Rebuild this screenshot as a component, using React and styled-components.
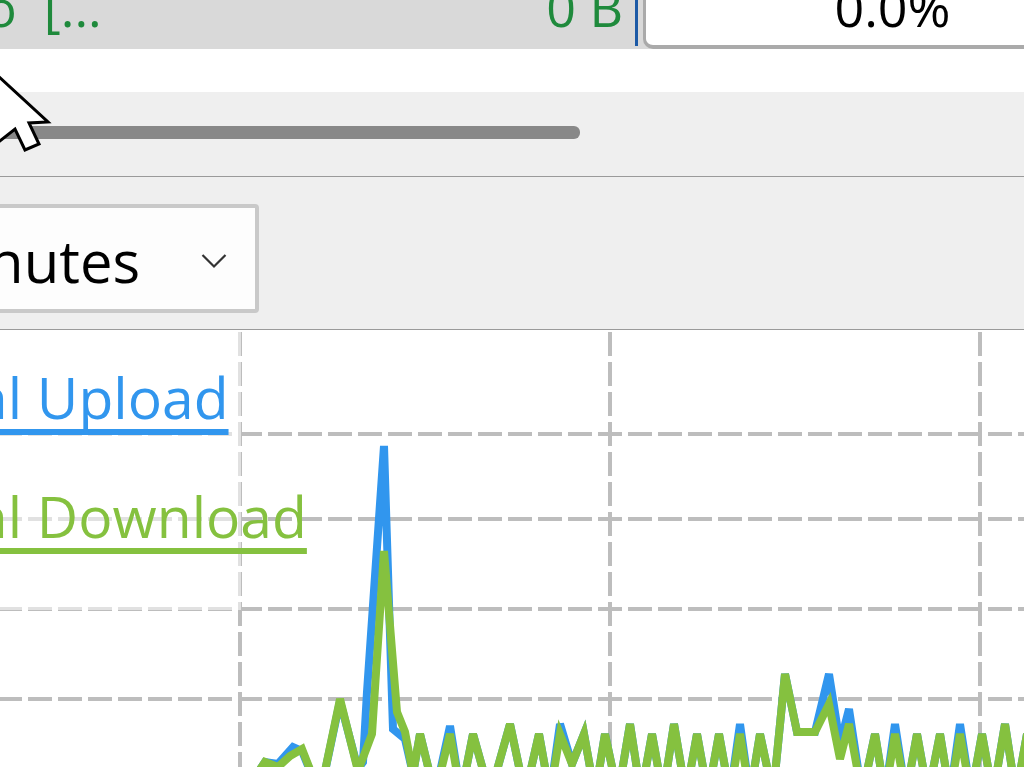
import React from "react";
import styled, { createGlobalStyle } from "styled-components";

const GlobalStyle = createGlobalStyle`
	html, body {
		margin: 0;
		padding: 0;
		background: #ffffff;
	}
	body {
		font-family: "Open Sans", "Noto Sans", "Liberation Sans", sans-serif;
	}
`;

// chart data, drawn in screen coordinates (viewBox starts at the chart top)
const CHART_TOP = 331;
const LOW = 796;

const greenPoints = [
	[255, 778], [265, 763], [278, 768], [290, 757], [302, 750], [320, LOW],
	[340, 700], [358, 772], [372, 735], [384, 552], [397, 713], [405, 733],
	[413, 775], [420, 735], [435, LOW], [450, 735], [461, LOW], [473, 735],
	[490, LOW], [510, 725], [525, LOW], [539, 735], [550, LOW], [560, 735],
	[572, 765], [584, 735], [595, LOW], [605, 735], [618, LOW], [630, 725],
	[641, LOW], [652, 735], [663, LOW], [674, 725], [686, LOW], [697, 735],
	[708, LOW], [719, 735], [730, LOW], [740, 735], [750, LOW], [760, 735],
	[773, LOW], [785, 675], [797, 733], [815, 733], [829, 705], [840, 760],
	[849, 725], [862, LOW], [875, 735], [885, LOW], [895, 735], [906, LOW],
	[917, 735], [928, LOW], [940, 735], [950, LOW], [960, 735], [971, LOW],
	[982, 735], [993, LOW], [1005, 725], [1016, LOW], [1027, 735], [1036, LOW],
];

const bluePoints = [
	[255, 778], [265, 763], [278, 765], [293, 748], [302, 752], [320, LOW],
	[340, 702], [358, 770], [363, 763], [367, 693], [384, 447], [393, 730],
	[405, 740], [413, 775], [420, 735], [435, LOW], [450, 727], [461, LOW],
	[473, 735], [490, LOW], [510, 725], [525, LOW], [539, 735], [550, LOW],
	[560, 725], [572, 765], [584, 735], [595, LOW], [605, 735], [618, LOW],
	[630, 725], [641, LOW], [652, 735], [663, LOW], [674, 725], [686, LOW],
	[697, 735], [708, LOW], [719, 735], [730, LOW], [740, 725], [750, LOW],
	[760, 735], [773, LOW], [785, 675], [797, 733], [815, 733], [829, 675],
	[840, 745], [849, 710], [862, LOW], [875, 735], [885, LOW], [895, 725],
	[906, LOW], [917, 735], [928, LOW], [940, 735], [950, LOW], [960, 725],
	[971, LOW], [982, 735], [993, LOW], [1005, 725], [1016, LOW], [1027, 735],
	[1036, LOW],
];

const hLines = [435, 520, 610, 700];
const vLines = [240, 610, 980];

const toPoints = (pts) => pts.map(([x, y]) => `${x},${y}`).join(" ");

const Chevron = () => (
	<svg width="26" height="16" viewBox="0 0 26 16" fill="none">
		<path d="M1.5 2 L13 13.5 L24.5 2" stroke="#333" strokeWidth="2.2" />
	</svg>
);

const Cursor = () => (
	<svg width="60" height="84" viewBox="-6 70 60 84">
		<path
			d="M-4 74 L48 122 L29 123 L39 144 L25 150 L15 129 L-4 144 Z"
			fill="#ffffff"
			stroke="#000000"
			strokeWidth="3"
		/>
	</svg>
);

const App = () => {
	return (
		<>
			<GlobalStyle />
			<Page>
				<ProcessRow>
					<NameCell>
						<CellText $color="#1f8a3c" $shift="-359px">
							Windows Audio&nbsp;&nbsp;[...
						</CellText>
					</NameCell>
					<SizeCell>
						<CellText $color="#1f8a3c">0 B</CellText>
					</SizeCell>
					<Divider />
					<PercentCell>
						<CellText $color="#000000">0.0%</CellText>
					</PercentCell>
				</ProcessRow>
				<ListTail />
				<ScrollTrack>
					<ScrollThumb />
				</ScrollTrack>
				<FilterBar>
					<Select>
						<SelectText>Last 10 Minutes</SelectText>
						<Chevron />
					</Select>
				</FilterBar>
				<ChartArea>
					<ChartSvg viewBox={`0 ${CHART_TOP} 1024 437`}>
						{hLines.map((y) => (
							<line
								key={"h" + y}
								x1="-2"
								y1={y}
								x2="1030"
								y2={y}
								stroke="#bdbdbd"
								strokeWidth="4"
								strokeDasharray="24 6"
							/>
						))}
						{vLines.map((x) => (
							<line
								key={"v" + x}
								x1={x}
								y1="333"
								x2={x}
								y2="780"
								stroke="#bdbdbd"
								strokeWidth="4"
								strokeDasharray="24 6"
							/>
						))}
						<polyline
							points={toPoints(bluePoints)}
							fill="none"
							stroke="#3196ee"
							strokeWidth="8"
						/>
						<polyline
							points={toPoints(greenPoints)}
							fill="none"
							stroke="#85c13f"
							strokeWidth="8"
						/>
					</ChartSvg>
					<Legend>
						<LegendItem $color="#3196ee">Total Upload</LegendItem>
						<LegendItem $color="#85c13f">Total Download</LegendItem>
					</Legend>
				</ChartArea>
				<CursorLayer>
					<Cursor />
				</CursorLayer>
			</Page>
		</>
	);
};

const Page = styled.div`
	position: relative;
	width: 1024px;
	height: 768px;
	overflow: hidden;
	display: flex;
	flex-direction: column;
	background: #ffffff;
`;

const ProcessRow = styled.div`
	flex-shrink: 0;
	width: 1139px;
	height: 49px;
	display: flex;
	background: #d9d9d9;
	font-size: 52px;
	line-height: 52px;
	white-space: nowrap;
`;

const CellText = styled.div`
	margin-top: -19px;
	margin-left: ${(p) => p.$shift || "0"};
	color: ${(p) => p.$color};
`;

const NameCell = styled.div`
	flex: 1;
	min-width: 0;
	overflow: hidden;
`;

const SizeCell = styled.div`
	flex-shrink: 0;
	padding-right: 12px;
`;

const Divider = styled.div`
	flex-shrink: 0;
	width: 3px;
	height: 46px;
	background: #1c5aa6;
	margin-right: 5px;
`;

const PercentCell = styled.div`
	flex-shrink: 0;
	width: 496px;
	height: 49px;
	box-sizing: border-box;
	display: flex;
	justify-content: center;
	overflow: hidden;
	background: #ffffff;
	border-left: 3px solid #aaaaaa;
	border-bottom: 4px solid #aaaaaa;
	border-bottom-left-radius: 10px;
`;

const ListTail = styled.div`
	flex-shrink: 0;
	height: 43px;
	background: #ffffff;
`;

const ScrollTrack = styled.div`
	flex-shrink: 0;
	height: 85px;
	background: #efefef;
	padding-top: 34px;
	box-sizing: border-box;
	border-bottom: 1px solid #9a9a9a;
`;

const ScrollThumb = styled.div`
	width: 600px;
	height: 13px;
	margin-left: -20px;
	background: #888888;
	border-radius: 6px;
`;

const FilterBar = styled.div`
	flex-shrink: 0;
	height: 153px;
	box-sizing: border-box;
	padding-top: 27px;
	background: #efefef;
	border-bottom: 1px solid #9a9a9a;
`;

const Select = styled.div`
	width: 589px;
	height: 109px;
	box-sizing: border-box;
	margin-left: -330px;
	padding: 5px 28px 0 40px;
	display: flex;
	align-items: center;
	justify-content: space-between;
	background: #fdfdfd;
	border: 4px solid #c9c9c9;
	border-radius: 4px;
`;

const SelectText = styled.span`
	font-size: 58px;
	line-height: 1;
	color: #000000;
	white-space: nowrap;
`;

const ChartArea = styled.div`
	position: relative;
	flex: 1;
	background: #ffffff;
`;

const ChartSvg = styled.svg`
	display: block;
	width: 1024px;
	height: 437px;
`;

const Legend = styled.div`
	position: absolute;
	left: -110px;
	top: 0;
	width: 351px;
	height: 280px;
	box-sizing: border-box;
	padding-top: 8px;
	background: rgba(255, 255, 255, 0.55);
	display: flex;
	flex-direction: column;
`;

const LegendItem = styled.div`
	font-size: 57px;
	line-height: 119px;
	white-space: nowrap;
	color: ${(p) => p.$color};
	text-decoration: underline;
	text-decoration-color: ${(p) => p.$color};
	text-decoration-thickness: 6px;
	text-decoration-skip-ink: none;
	text-underline-offset: 10px;
	padding-right: 6px;
`;

const CursorLayer = styled.div`
	position: absolute;
	left: -6px;
	top: 70px;
	pointer-events: none;
`;

export default App;
